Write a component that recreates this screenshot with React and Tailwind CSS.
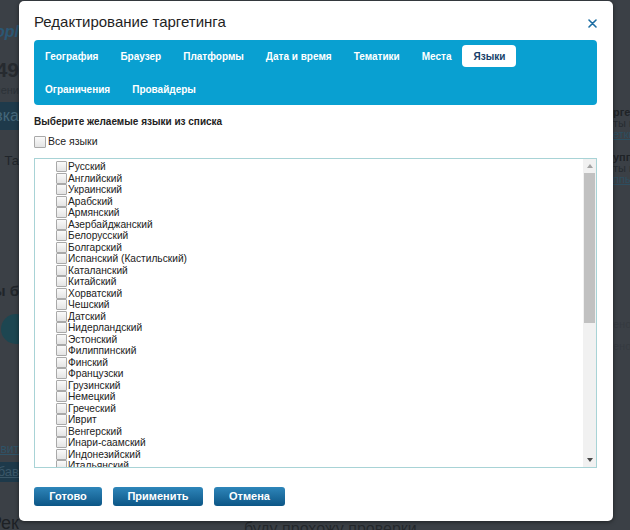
import React from "react";

const tabs = ["География", "Браузер", "Платформы", "Дата и время", "Тематики", "Места", "Языки", "Ограничения", "Провайдеры"];

const languages = [
  "Русский", "Английский", "Украинский", "Арабский", "Армянский", "Азербайджанский", "Белорусский", "Болгарский",
  "Испанский (Кастильский)", "Каталанский", "Китайский", "Хорватский", "Чешский", "Датский", "Нидерландский",
  "Эстонский", "Филиппинский", "Финский", "Французски", "Грузинский", "Немецкий", "Греческий", "Иврит",
  "Венгерский", "Инари-саамский", "Индонезийский", "Итальянский", "Японский", "Казахский",
];

function Box({ size = "w-[11px] h-[11px]" }) {
  return (
    <span className={`${size} shrink-0 rounded-[1px] border border-[#a9a9a9] bg-gradient-to-b from-[#fafafa] to-[#e4e4e4]`} />
  );
}

function Background() {
  return (
    <div className="flex h-full w-full justify-between">
      <div className="flex w-[19px] flex-col overflow-hidden">
        <div className="mt-[23px] flex h-[18px] justify-end whitespace-nowrap text-[16px] font-bold italic leading-[18px] text-[#2b5774]">Shopl</div>
        <div className="mt-[17px] flex h-[24px] justify-end whitespace-nowrap text-[21px] font-bold leading-[24px] text-[#262a2f]">1 49</div>
        <div className="mt-[2px] flex h-[12px] justify-end whitespace-nowrap text-[11px] leading-[12px] text-[#2c3238]">Изменени</div>
        <div className="mt-[6px] flex h-[28px] items-center justify-end whitespace-nowrap bg-[#1e3a4b] text-[16px] leading-[28px] text-[#45677a]">Заявка</div>
        <div className="mt-[24px] flex h-[14px] justify-end whitespace-nowrap text-[13px] leading-[14px] text-[#20252a]">Та</div>
        <div className="mt-[115px] flex h-[16px] justify-end whitespace-nowrap text-[15px] font-bold leading-[16px] text-[#20252a]">Бы б</div>
        <div className="mt-[15px] flex h-[30px] justify-end">
          <span className="-mr-[12px] h-[30px] w-[30px] shrink-0 rounded-full bg-[#1d4651]" />
        </div>
        <div className="mt-[99px] flex h-[13px] justify-end whitespace-nowrap text-[12px] leading-[13px] text-[#2f5367] underline">Добавит</div>
        <div className="mt-[6px] flex h-[23px] items-center justify-end whitespace-nowrap bg-[#1d394a] text-[13px] text-[#3b5768] underline">Добав</div>
        <div className="mt-[33px] flex h-[16px] justify-end whitespace-nowrap text-[18px] leading-[16px] text-[#1d2125]">Рек</div>
      </div>
      <div className="flex flex-1 flex-col justify-end">
        <div className="ml-[225px] h-[9px] overflow-hidden whitespace-nowrap text-[16px] leading-[16px] text-[#24282c]">буду прохожу проверки</div>
      </div>
      <div className="flex w-[17px] flex-col overflow-hidden whitespace-nowrap">
        <div className="mt-[107px] h-[11px] text-[11px] font-bold leading-[11px] text-[#1f2327]">ргетинг</div>
        <div className="h-[11px] text-[11px] leading-[11px] text-[#262b30]">ты на</div>
        <div className="h-[11px] text-[11px] leading-[11px] text-[#2d4e60] underline">етки</div>
        <div className="mt-[12px] h-[11px] text-[11px] font-bold leading-[11px] text-[#1f2327]">уппы</div>
        <div className="h-[11px] text-[11px] leading-[11px] text-[#262b30]">ты на</div>
        <div className="h-[11px] text-[11px] leading-[11px] text-[#2d4e60] underline">ппы</div>
        <div className="mt-[134px] h-[11px] text-[11px] leading-[11px] text-[#353a40]">ено</div>
        <div className="mt-[11px] h-[11px] text-[11px] leading-[11px] text-[#353a40]">ено</div>
      </div>
    </div>
  );
}

export default function App() {
  return (
    <div className="relative h-[530px] w-[630px] overflow-hidden bg-[#3b4046] font-['Liberation_Sans',Arial,sans-serif]">
      <Background />
      <div className="absolute left-[19px] top-[1px] flex h-[520px] w-[594px] flex-col rounded-[5px] bg-white pl-[15px] pr-[16px] shadow-[0_1px_4px_rgba(0,0,0,0.5)]">
        <div className="mt-[12px] flex h-[18px] items-center justify-between">
          <span className="text-[15px] leading-[18px] text-[#1f1f1f]">Редактирование таргетинга</span>
          <svg width="9" height="9" viewBox="0 0 9 9" className="mt-[2px]">
            <path d="M1 1 L8 8 M8 1 L1 8" stroke="#1d6ea3" strokeWidth="1.6" strokeLinecap="round" />
          </svg>
        </div>
        <div className="mt-[9px] flex h-[65px] flex-wrap content-start gap-y-[11px] rounded-[4px] bg-[#09a0d1] py-[5px]">
          {tabs.map((t) =>
            t === "Языки" ? (
              <span key={t} className="flex h-[22px] items-center rounded-[4px] bg-white px-[11px] text-[10px] font-bold text-[#173f6a]">{t}</span>
            ) : (
              <span key={t} className="flex h-[22px] items-center px-[11px] text-[10px] font-bold text-white">{t}</span>
            )
          )}
        </div>
        <div className="mt-[10px] text-[10px] font-bold leading-[14px] text-[#222]">Выберите желаемые языки из списка</div>
        <div className="mt-[6px] flex h-[13px] items-center">
          <Box size="w-[12px] h-[12px]" />
          <span className="ml-[2px] text-[10.5px] leading-[13px] text-[#222]">Все языки</span>
        </div>
        <div className="mt-[10px] flex h-[310px] border border-[#a8d3d6]">
          <div className="flex-1 overflow-hidden pl-[21px] pt-[2px]">
            {languages.map((l) => (
              <div key={l} className="flex h-[11.5px] items-center">
                <Box />
                <span className="ml-[1px] whitespace-nowrap text-[10.2px] leading-[11.5px] text-[#222]">{l}</span>
              </div>
            ))}
          </div>
          <div className="flex w-[13px] flex-col bg-[#f1f1f1]">
            <div className="flex h-[14px] items-center justify-center">
              <span className="h-0 w-0 border-x-[3px] border-b-[4px] border-x-transparent border-b-[#a3a3a3]" />
            </div>
            <div className="mx-[1px] h-[150px] bg-[#c1c1c1]" />
            <div className="flex-1" />
            <div className="flex h-[14px] items-center justify-center">
              <span className="h-0 w-0 border-x-[3px] border-t-[4px] border-x-transparent border-t-[#4a4a4a]" />
            </div>
          </div>
        </div>
        <div className="mt-[19px] flex gap-[11px]">
          {[["Готово", "w-[68px]"], ["Применить", "w-[90px]"], ["Отмена", "w-[71px]"]].map(([t, w]) => (
            <span key={t} className={`${w} flex h-[19px] items-center justify-center rounded-[3px] bg-gradient-to-b from-[#2e86ba] to-[#0b5686] text-[11px] font-bold text-white`}>{t}</span>
          ))}
        </div>
      </div>
    </div>
  );
}
